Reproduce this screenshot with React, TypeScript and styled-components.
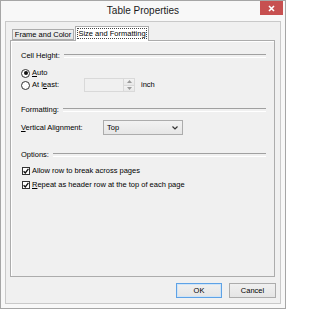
import React from "react";
import styled, { createGlobalStyle } from "styled-components";

const GlobalStyle = createGlobalStyle`
  html, body {
    margin: 0;
    padding: 0;
    background: #ffffff;
  }
  body {
    font-family: "Liberation Sans", Arial, sans-serif;
    font-size: 7.5px;
    color: #000;
  }
  * {
    box-sizing: border-box;
  }
`;

const Window = styled.div`
  width: 286px;
  height: 309px;
  display: flex;
  flex-direction: column;
  padding: 0 4px 4px 4px;
  background: #f8f8f8;
  border: 1px solid #a6a6a6;
`;

const TitleBar = styled.div`
  height: 20px;
  display: grid;
  grid-template-columns: 1fr auto 1fr;
  align-items: center;
`;

const Title = styled.div`
  grid-column: 2;
  font-size: 10px;
  line-height: 12px;
  color: #1a1a1a;
`;

const CloseButton = styled.div`
  grid-column: 3;
  justify-self: end;
  align-self: start;
  width: 23px;
  height: 14px;
  margin-right: -2px;
  background: #c75050;
  display: flex;
  align-items: center;
  justify-content: center;
`;

const Client = styled.div`
  flex: 1;
  display: flex;
  flex-direction: column;
  padding: 4px 4px 5px 4px;
  background: #f0f0f0;
  border: 1px solid #c9c9c9;
`;

const TabStrip = styled.div`
  height: 14px;
  display: flex;
  align-items: flex-end;
  padding-left: 2px;
  position: relative;
  z-index: 1;
`;

const Tab = styled.div<{ $active?: boolean; $width: number }>`
  width: ${p => p.$width}px;
  height: ${p => (p.$active ? 15 : 11)}px;
  margin-left: ${p => (p.$active ? 1 : 0)}px;
  margin-bottom: ${p => (p.$active ? -1 : 0)}px;
  padding: ${p => (p.$active ? "1px 1px 2px" : "0")};
  border: 1px solid #acacac;
  border-bottom: ${p => (p.$active ? "none" : "1px solid #acacac")};
  background: ${p => (p.$active ? "#ffffff" : "linear-gradient(#f0f0f0, #e5e5e5)")};
  display: flex;
  line-height: 9px;
`;

const TabText = styled.span<{ $focused?: boolean }>`
  flex: 1;
  display: flex;
  align-items: center;
  justify-content: center;
  border: 1px dotted ${p => (p.$focused ? "#444" : "transparent")};
`;

const Panel = styled.div`
  height: 237px;
  margin-right: 1px;
  padding: 10px 8px 0 10px;
  display: flex;
  flex-direction: column;
  border: 1px solid #acacac;
  background: #f0f0f0;
  box-shadow: inset 1px 1px 0 #ffffff;
`;

const SectionHeader = styled.div<{ $top: number }>`
  height: 10px;
  margin-top: ${p => p.$top}px;
  display: flex;
  align-items: center;
  line-height: 10px;
  &::after {
    content: "";
    flex: 1;
    height: 2px;
    margin: -1px 0 0 4px;
    border-top: 1px solid #a0a0a0;
    border-bottom: 1px solid #ffffff;
  }
`;

const Row = styled.div<{ $top: number; $height: number }>`
  height: ${p => p.$height}px;
  margin-top: ${p => p.$top}px;
  display: flex;
  align-items: center;
  line-height: 10px;
`;

const Option = styled.label<{ $width?: number }>`
  display: flex;
  align-items: center;
  width: ${p => (p.$width ? `${p.$width}px` : "auto")};
`;

const Radio = styled.span<{ $checked?: boolean }>`
  width: 9px;
  height: 9px;
  margin-right: 2px;
  border-radius: 50%;
  border: 1px solid #333;
  background: #fff;
  display: flex;
  align-items: center;
  justify-content: center;
  &::after {
    content: "";
    width: 4px;
    height: 4px;
    border-radius: 50%;
    background: ${p => (p.$checked ? "#111" : "transparent")};
  }
`;

const Check = styled.span`
  width: 8px;
  height: 8px;
  margin: 0 2px 0 1px;
  border: 1px solid #333;
  background: #fff;
  display: flex;
  align-items: center;
  justify-content: center;
`;

const Key = styled.span`
  text-decoration: underline;
  text-underline-offset: 1px;
`;

const SpinBox = styled.div<{ $width: number }>`
  width: ${p => p.$width}px;
  height: 14px;
  display: flex;
  border: 1px solid #d9d9d9;
  background: #f0f0f0;
`;

const SpinField = styled.div`
  flex: 1;
`;

const SpinButtons = styled.div`
  width: 11px;
  display: flex;
  flex-direction: column;
  border-left: 1px solid #d9d9d9;
`;

const SpinButton = styled.div<{ $down?: boolean }>`
  flex: 1;
  display: flex;
  align-items: center;
  justify-content: center;
  background: linear-gradient(#f3f3f3, #e8e8e8);
  border-top: ${p => (p.$down ? "1px solid #d9d9d9" : "none")};
`;

const Unit = styled.span`
  margin-left: 6px;
`;

const Select = styled.div<{ $width: number }>`
  width: ${p => p.$width}px;
  height: 15px;
  display: flex;
  align-items: center;
  justify-content: space-between;
  padding: 0 4px 0 3px;
  border: 1px solid #acacac;
  background: linear-gradient(#f2f2f2, #e6e6e6);
`;

const ButtonBar = styled.div`
  margin-top: 6px;
  display: flex;
  justify-content: flex-end;
  gap: 7px;
`;

const Button = styled.div<{ $default?: boolean; $width: number }>`
  width: ${p => p.$width}px;
  height: 15px;
  display: flex;
  align-items: center;
  justify-content: center;
  border: 1px solid ${p => (p.$default ? "#5ea2e6" : "#acacac")};
  background: linear-gradient(#f0f0f0, #e5e5e5);
  box-shadow: ${p => (p.$default ? "inset 0 0 0 1px #cfe4f7" : "none")};
`;

const Arrow = ({ up }: { up?: boolean }) => (
  <svg width="5" height="3" viewBox="0 0 5 3">
    <path d={up ? "M0 3 L2.5 0 L5 3 Z" : "M0 0 L2.5 3 L5 0 Z"} fill="#9a9a9a" />
  </svg>
);

const Chevron = () => (
  <svg width="6" height="4" viewBox="0 0 6 4">
    <path d="M0.5 0.5 L3 3 L5.5 0.5" fill="none" stroke="#333" strokeWidth="1.2" />
  </svg>
);

const Tick = () => (
  <svg width="6" height="6" viewBox="0 0 6 6">
    <path d="M0.6 3.2 L2.3 4.9 L5.4 0.8" fill="none" stroke="#111" strokeWidth="1.3" />
  </svg>
);

const CloseGlyph = () => (
  <svg width="7" height="7" viewBox="0 0 7 7">
    <path d="M1 1 L6 6 M6 1 L1 6" stroke="#fff" strokeWidth="1.6" />
  </svg>
);

export default function App() {
  return (
    <>
      <GlobalStyle />
      <Window>
        <TitleBar>
          <Title>Table Properties</Title>
          <CloseButton>
            <CloseGlyph />
          </CloseButton>
        </TitleBar>
        <Client>
          <TabStrip>
            <Tab $width={62}>
              <TabText>Frame and Color</TabText>
            </Tab>
            <Tab $active $width={74}>
              <TabText $focused>Size and Formatting</TabText>
            </Tab>
          </TabStrip>
          <Panel>
            <SectionHeader $top={0}>Cell Height:</SectionHeader>
            <Row $top={7} $height={10}>
              <Option>
                <Radio $checked />
                <span>
                  <Key>A</Key>uto
                </span>
              </Option>
            </Row>
            <Row $top={0} $height={14}>
              <Option $width={63}>
                <Radio />
                <span>
                  At l<Key>e</Key>ast:
                </span>
              </Option>
              <SpinBox $width={51}>
                <SpinField />
                <SpinButtons>
                  <SpinButton>
                    <Arrow up />
                  </SpinButton>
                  <SpinButton $down>
                    <Arrow />
                  </SpinButton>
                </SpinButtons>
              </SpinBox>
              <Unit>inch</Unit>
            </Row>

            <SectionHeader $top={13}>Formatting:</SectionHeader>
            <Row $top={5} $height={15}>
              <Option $width={82}>
                <span>
                  <Key>V</Key>ertical Alignment:
                </span>
              </Option>
              <Select $width={80}>
                <span>Top</span>
                <Chevron />
              </Select>
            </Row>

            <SectionHeader $top={15}>Options:</SectionHeader>
            <Row $top={6} $height={10}>
              <Option>
                <Check>
                  <Tick />
                </Check>
                <span>Allow row to break across pages</span>
              </Option>
            </Row>
            <Row $top={4} $height={10}>
              <Option>
                <Check>
                  <Tick />
                </Check>
                <span>
                  <Key>R</Key>epeat as header row at the top of each page
                </span>
              </Option>
            </Row>
          </Panel>
          <ButtonBar>
            <Button $default $width={46}>
              OK
            </Button>
            <Button $width={47}>Cancel</Button>
          </ButtonBar>
        </Client>
      </Window>
    </>
  );
}
